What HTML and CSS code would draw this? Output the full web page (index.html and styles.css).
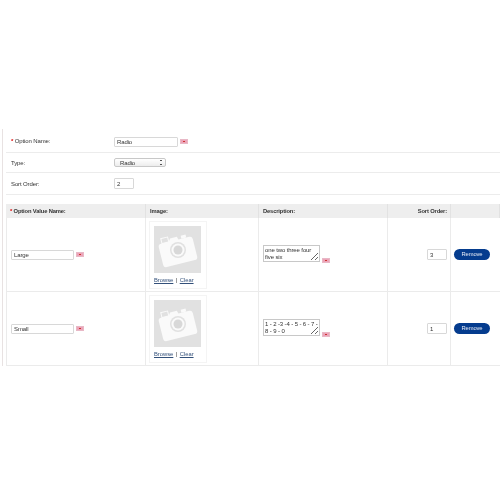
FILE: index.html
```html
<!DOCTYPE html>
<html lang="en">
<head>
    <meta charset="UTF-8">
    <title>Option Form</title>
    <link rel="stylesheet" href="styles.css">
</head>
<body>
    <div class="page">
        <div class="form-row name-row">
            <label class="form-label"><span class="required">*</span> Option Name:</label>
            <div class="form-field">
                <input class="text-input name-input" type="text" value="Radio">
                <span class="flag"></span>
            </div>
        </div>
        <div class="form-row type-row">
            <label class="form-label">Type:</label>
            <div class="form-field">
                <div class="fake-select">Radio<span class="select-arrows"></span></div>
            </div>
        </div>
        <div class="form-row sort-row">
            <label class="form-label">Sort Order:</label>
            <div class="form-field">
                <input class="text-input order-input" type="text" value="2">
            </div>
        </div>

        <table class="values">
            <thead>
                <tr>
                    <th class="col-name"><span class="required">*</span> Option Value Name:</th>
                    <th class="col-image">Image:</th>
                    <th class="col-desc">Description:</th>
                    <th class="col-order">Sort Order:</th>
                    <th class="col-action"></th>
                </tr>
            </thead>
            <tbody>
                <tr>
                    <td class="name-cell">
                        <input class="text-input value-input" type="text" value="Large">
                        <span class="flag"></span>
                    </td>
                    <td class="image-cell">
                        <div class="image-box">
                            <svg class="thumb" viewBox="0 0 47 47">
                                <rect width="47" height="47" fill="#e1e1e1"/>
                                <g transform="rotate(-14 23.5 24)">
                                    <path d="M10 14h7l2-3h7l1 3h11a3 3 0 0 1 3 3v18a3 3 0 0 1-3 3H9a3 3 0 0 1-3-3V17a3 3 0 0 1 3-3z" fill="#fafafa"/>
                                    <rect x="10" y="9" width="7" height="5" fill="none" stroke="#fafafa"/>
                                    <rect x="30" y="11" width="5" height="3" fill="#fafafa"/>
                                </g>
                                <circle cx="24" cy="24" r="8" fill="#e1e1e1"/>
                                <circle cx="24" cy="24" r="6.500" fill="#fafafa"/>
                                <circle cx="24" cy="24" r="4.500" fill="#d8d8d8"/>
                            </svg>
                            <div class="image-links"><a href="#">Browse</a> &nbsp;|&nbsp; <a href="#">Clear</a></div>
                        </div>
                    </td>
                    <td>
                        <div class="desc-cell">
                            <textarea class="desc-input">one two three four five six</textarea>
                            <span class="flag"></span>
                        </div>
                    </td>
                    <td class="order-cell"><input class="text-input order-input" type="text" value="3"></td>
                    <td class="action-cell"><a class="remove-btn" href="#">Remove</a></td>
                </tr>
                <tr>
                    <td class="name-cell">
                        <input class="text-input value-input" type="text" value="Small">
                        <span class="flag"></span>
                    </td>
                    <td class="image-cell">
                        <div class="image-box">
                            <svg class="thumb" viewBox="0 0 47 47">
                                <rect width="47" height="47" fill="#e1e1e1"/>
                                <g transform="rotate(-14 23.5 24)">
                                    <path d="M10 14h7l2-3h7l1 3h11a3 3 0 0 1 3 3v18a3 3 0 0 1-3 3H9a3 3 0 0 1-3-3V17a3 3 0 0 1 3-3z" fill="#fafafa"/>
                                    <rect x="10" y="9" width="7" height="5" fill="none" stroke="#fafafa"/>
                                    <rect x="30" y="11" width="5" height="3" fill="#fafafa"/>
                                </g>
                                <circle cx="24" cy="24" r="8" fill="#e1e1e1"/>
                                <circle cx="24" cy="24" r="6.500" fill="#fafafa"/>
                                <circle cx="24" cy="24" r="4.500" fill="#d8d8d8"/>
                            </svg>
                            <div class="image-links"><a href="#">Browse</a> &nbsp;|&nbsp; <a href="#">Clear</a></div>
                        </div>
                    </td>
                    <td>
                        <div class="desc-cell">
                            <textarea class="desc-input">1 - 2 -3 -4 - 5 - 6 - 7 - 8 - 9 - 0</textarea>
                            <span class="flag"></span>
                        </div>
                    </td>
                    <td class="order-cell"><input class="text-input order-input" type="text" value="1"></td>
                    <td class="action-cell"><a class="remove-btn" href="#">Remove</a></td>
                </tr>
            </tbody>
        </table>
    </div>
</body>
</html>
```

FILE: styles.css
```css
html, body {
    margin: 0;
    padding: 0;
    background: #fff;
}
body {
    font-family: "Liberation Sans", Arial, sans-serif;
    font-size: 6px;
    letter-spacing: -0.12px;
    color: #333;
    overflow: hidden;
}
.page {
    margin-top: 129px;
    margin-left: 2px;
    padding-left: 3px;
    border-left: 1px solid #e8e2e2;
    height: 237px;
    filter: blur(0.3px);
}
.required {
    color: #d00;
    font-weight: bold;
}
.form-row {
    display: flex;
    align-items: center;
    height: 24px;
    border-bottom: 1px solid #ececec;
    box-sizing: border-box;
    padding-top: 2px;
}
.name-row .form-label {
    margin-top: -2px;
}
.type-row {
    height: 20px;
    padding-top: 0;
}
.sort-row {
    height: 22px;
    padding-top: 0;
    margin-bottom: 9px;
}
.form-label {
    width: 108px;
    padding-left: 5px;
    box-sizing: border-box;
}
.form-field {
    display: flex;
    align-items: center;
    gap: 2px;
}
.text-input {
    font-family: inherit;
    font-size: 6px;
    letter-spacing: -0.12px;
    color: #333;
    box-sizing: border-box;
    height: 10px;
    padding: 0 2px;
    margin: 0;
    background: #fff;
    border: 1px solid #d8d8d8;
    border-radius: 1px;
    outline: none;
}
.name-input {
    width: 64px;
}
.order-input {
    width: 20px;
    height: 11px;
}
.value-input {
    width: 63px;
    vertical-align: middle;
}
.flag {
    display: inline-block;
    width: 8px;
    height: 5px;
    vertical-align: middle;
    background: #eca4b8;
    border: 1px solid #e8b8c6;
    box-sizing: border-box;
    position: relative;
}
.flag::after {
    content: "";
    position: absolute;
    left: 2px;
    top: 1px;
    width: 2px;
    height: 1px;
    background: #c33;
}
.fake-select {
    position: relative;
    width: 52px;
    height: 9px;
    line-height: 8px;
    padding-left: 5px;
    box-sizing: border-box;
    border: 1px solid #c8c8c8;
    border-radius: 2px;
    background: linear-gradient(#fff, #ececec);
}
.select-arrows {
    position: absolute;
    right: 3px;
    top: 1px;
    width: 2px;
    height: 5px;
    border-top: 1px solid #555;
    border-bottom: 1px solid #555;
    box-sizing: border-box;
}
.values {
    width: 494px;
    border-collapse: separate;
    border-spacing: 0;
    table-layout: fixed;
}
.values th {
    height: 14px;
    padding: 0 4px;
    background: #eee;
    font-size: 5.8px;
    letter-spacing: -0.15px;
    font-weight: bold;
    text-align: left;
    border-right: 1px solid #e2e2e2;
    box-sizing: border-box;
}
.values td {
    height: 74px;
    padding: 0 4px;
    border-right: 1px solid #ebebeb;
    border-bottom: 1px solid #ebebeb;
    box-sizing: border-box;
}
.values td.name-cell {
    border-left: 1px solid #ebebeb;
}
.values td.image-cell {
    padding: 3px 0 0 3px;
    vertical-align: top;
}
.col-name { width: 140px; }
.col-image { width: 113px; }
.col-desc { width: 129px; }
.col-order { width: 63px; }
.values .col-order {
    text-align: right;
    padding-right: 3px;
}
.image-box {
    width: 58px;
    height: 68px;
    box-sizing: border-box;
    padding: 4px 4px 0 4px;
    border: 1px solid #f4f4f4;
}
.thumb {
    display: block;
    width: 47px;
    height: 47px;
}
.image-links {
    margin-top: 4px;
    font-size: 5.8px;
    letter-spacing: 0;
    word-spacing: -0.4px;
    white-space: nowrap;
}
.image-links a {
    color: #33507a;
}
.desc-cell {
    display: flex;
    align-items: flex-end;
    gap: 2px;
    margin-top: -2px;
}
.desc-input {
    display: block;
    width: 57px;
    height: 17px;
    padding: 1px;
    margin: 0;
    box-sizing: border-box;
    font-family: inherit;
    font-size: 6px;
    letter-spacing: -0.12px;
    line-height: 7px;
    color: #333;
    background: #fff;
    border: 1px solid #c8c8c8;
    border-radius: 0;
    outline: none;
    overflow: hidden;
}
.desc-cell .flag {
    margin-bottom: -1px;
}
.values td.order-cell {
    text-align: right;
    padding-right: 3px;
}
.values td.action-cell {
    border-right: none;
    padding: 0 3px;
}
.remove-btn {
    display: block;
    width: 36px;
    height: 11px;
    line-height: 11px;
    background: #053c8e;
    color: #e8edf6;
    border-radius: 6px;
    text-align: center;
    text-decoration: none;
    font-size: 5.8px;
    letter-spacing: -0.1px;
}
```
